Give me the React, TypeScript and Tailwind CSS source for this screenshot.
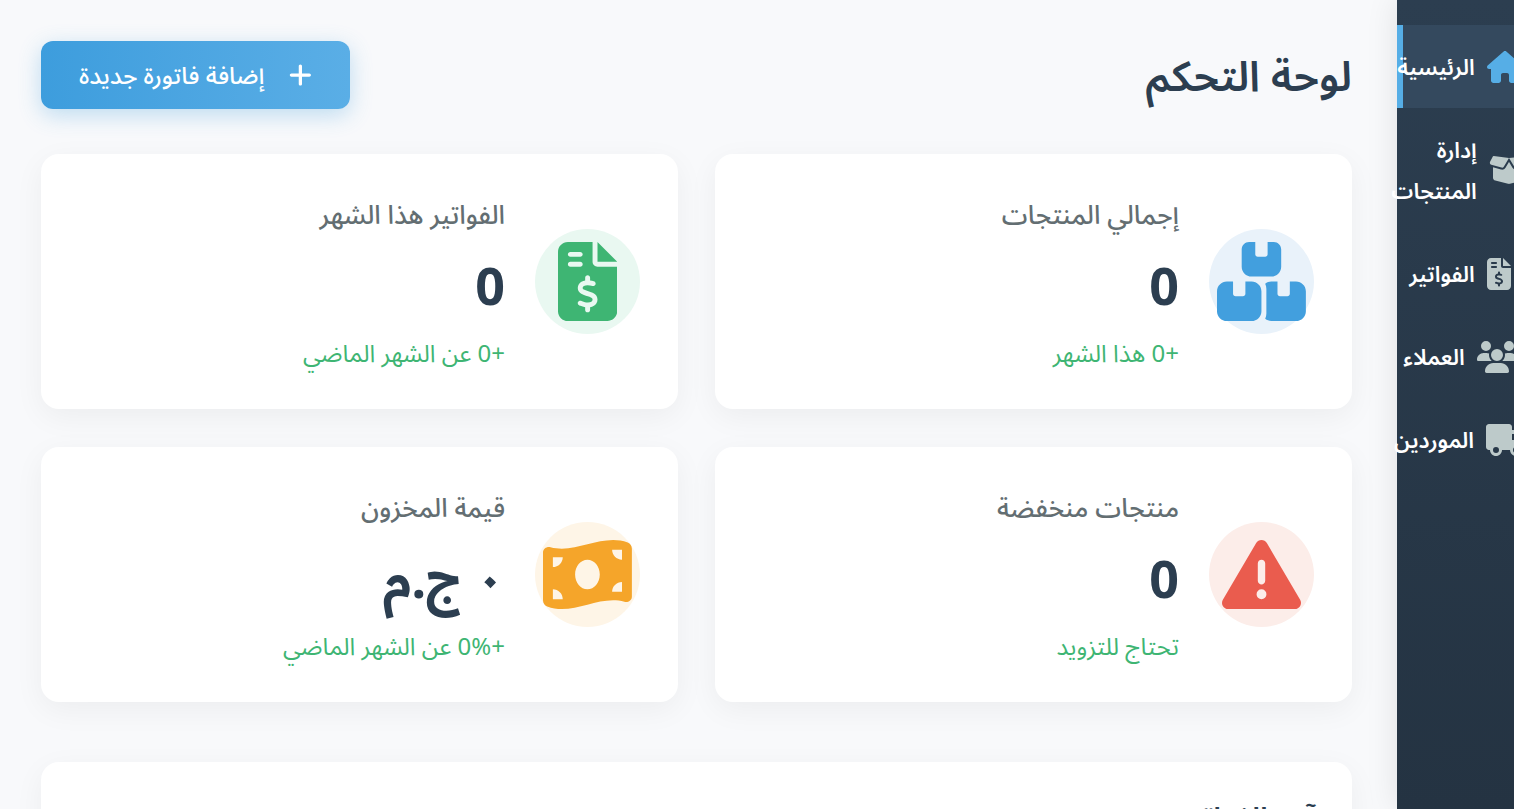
import type { IconType } from "react-icons";
import {
  FaBoxesStacked,
  FaBoxOpen,
  FaFileInvoiceDollar,
  FaHouse,
  FaMoneyBillWave,
  FaPlus,
  FaTriangleExclamation,
  FaTruck,
  FaUsers,
} from "react-icons/fa6";
import clsx from "clsx";

type NavItem = { name: string; icon: IconType; ratio: string; current?: boolean };

type Stat = {
  title: string;
  value: string;
  change: string;
  icon: IconType;
  ratio: string;
  iconClass: string;
};

const navigation: NavItem[] = [
  { name: "الرئيسية", icon: FaHouse, ratio: "aspect-9/8", current: true },
  { name: "إدارة المنتجات", icon: FaBoxOpen, ratio: "aspect-5/4" },
  { name: "الفواتير", icon: FaFileInvoiceDollar, ratio: "aspect-3/4" },
  { name: "العملاء", icon: FaUsers, ratio: "aspect-5/4" },
  { name: "الموردين", icon: FaTruck, ratio: "aspect-5/4" },
];

const stats: Stat[] = [
  {
    title: "إجمالي المنتجات",
    value: "0",
    change: "+0 هذا الشهر",
    icon: FaBoxesStacked,
    ratio: "aspect-9/8",
    iconClass: "bg-[#e9f2fa] text-[#429fde]",
  },
  {
    title: "الفواتير هذا الشهر",
    value: "0",
    change: "+0 عن الشهر الماضي",
    icon: FaFileInvoiceDollar,
    ratio: "aspect-3/4",
    iconClass: "bg-[#e9f8f1] text-[#3eb573]",
  },
  {
    title: "منتجات منخفضة",
    value: "0",
    change: "تحتاج للتزويد",
    icon: FaTriangleExclamation,
    ratio: "aspect-square",
    iconClass: "bg-[#fcede9] text-[#ea5c4e]",
  },
  {
    title: "قيمة المخزون",
    value: "٠ ج.م",
    change: "+0% عن الشهر الماضي",
    icon: FaMoneyBillWave,
    ratio: "aspect-9/8",
    iconClass: "bg-[#fef5e7] text-[#f5a52a]",
  },
];

function Sidebar() {
  return (
    <aside className="-ms-[3px] w-[120px] shrink-0 bg-linear-to-b from-[#2c3e50] to-[#243342] pt-[25px] shadow-[0_0_30px_rgba(0,0,0,0.1)]">
      <nav>
        {navigation.map((item) => (
          <a
            key={item.name}
            href="#"
            className={clsx(
              "flex items-center justify-center gap-3 border-l-6 py-[21px] text-[22px]/[41px] font-semibold text-white",
              item.current ? "border-[#56aee6] bg-[#34495e]" : "border-transparent"
            )}
          >
            <item.icon
              aria-hidden="true"
              className={clsx(
                "h-8 w-auto shrink-0",
                item.ratio,
                item.current ? "text-[#56aee6]" : "text-[#bdcaca]"
              )}
            />
            <span className="w-min">{item.name}</span>
          </a>
        ))}
      </nav>
    </aside>
  );
}

function StatCard({ stat }: { stat: Stat }) {
  return (
    <article className="flex items-center gap-[30px] rounded-[18px] bg-white px-[38px] py-[38px] shadow-[0_8px_30px_rgba(0,0,0,0.05)]">
      <div
        className={clsx(
          "flex size-[105px] shrink-0 items-center justify-center rounded-full",
          stat.iconClass
        )}
      >
        <stat.icon aria-hidden="true" className={clsx("h-[79px] w-auto", stat.ratio)} />
      </div>
      <div className="flex-1">
        <h3 className="text-[26px]/[44px] font-medium text-[#636e72]">{stat.title}</h3>
        <p className="text-[52px]/[98px] font-bold text-[#2c3e50]">{stat.value}</p>
        <p className="text-2xl/[37px] text-[#3eb573]">{stat.change}</p>
      </div>
    </article>
  );
}

export default function App() {
  return (
    <div
      dir="rtl"
      className="flex h-screen overflow-hidden bg-[#f8f9fb] font-['Noto_Sans','Noto_Sans_Arabic','DejaVu_Sans',sans-serif]"
    >
      <Sidebar />
      <main className="min-w-0 flex-1 pt-[41px] pr-[45px] pl-[41px]">
        <header className="mb-[45px] flex items-center justify-between">
          <h1 className="text-[42px]/[68px] font-semibold text-[#2c3e50]">لوحة التحكم</h1>
          <button
            type="button"
            className="flex h-[68px] items-center gap-[25px] rounded-xl bg-linear-to-r from-[#3d9ddd] to-[#5aaee6] px-[38px] text-2xl font-medium text-white shadow-[0_6px_22px_rgba(52,152,219,0.3)]"
          >
            <FaPlus aria-hidden="true" className="aspect-7/8 h-[26px] w-auto" />
            إضافة فاتورة جديدة
          </button>
        </header>
        <section className="grid grid-cols-2 gap-x-[37px] gap-y-[38px]">
          {stats.map((stat) => (
            <StatCard key={stat.title} stat={stat} />
          ))}
        </section>
        <section className="mt-[60px] rounded-[18px] bg-white p-[37px] shadow-[0_8px_30px_rgba(0,0,0,0.05)]">
          <h2 className="text-[30px]/[38px] font-semibold text-[#2c3e50]">آخر الفواتير</h2>
        </section>
      </main>
    </div>
  );
}
